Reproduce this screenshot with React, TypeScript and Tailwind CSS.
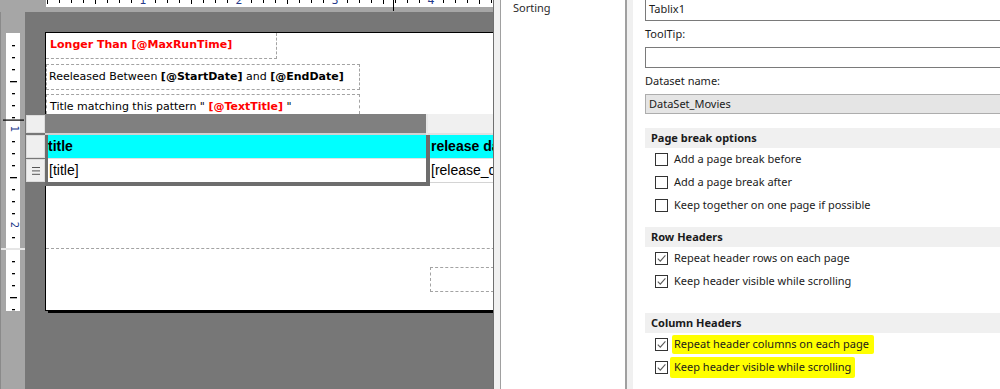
import React from "react";

const DASH = "border-dashed border-[#a3a3a3]";
const UI = "font-['Noto_Sans',sans-serif]";
const RPT = "font-['DejaVu_Sans',sans-serif]";
const TBL = "font-['Liberation_Sans',Arial,sans-serif]";

function HRuler() {
  const ticks = Array.from({ length: 38 }, (_, i) => i);
  return (
    <svg width="447" height="12" className="block shrink-0">
      <rect x="0" y="0" width="447" height="7" fill="#fff" />
      <rect x="0" y="7" width="447" height="5" fill="#a6a6a6" />
      {ticks.map((i) => {
        const x = 1 + i * 12;
        if (i % 8 === 0 && i > 0)
          return (
            <text key={i} x={x} y={4} fontSize="11" textAnchor="middle" fill="#23398a" fontFamily="DejaVu Sans">
              {i / 8}
            </text>
          );
        return <rect key={i} x={x} y={0} width={1} height={i % 4 === 0 ? 4 : 3} fill="#000" />;
      })}
      <rect x="347" y="0" width="1" height="11" fill="#000" />
    </svg>
  );
}

// left ruler, drawn from y=12 down
function VRuler() {
  const body = [45, 57, 69, 81, 93, 105, 117, 141, 153, 165, 177, 189, 201, 213, 237];
  const foot = [261, 273, 285, 297, 309];
  const longs = [81, 177, 297];
  return (
    <svg width="24" height="377" className="block">
      <rect x="5" y="21" width="14" height="278" fill="#fff" />
      <rect x="0" y="236" width="24" height="2" fill="#e6e6e6" />
      {[...body, ...foot].map((y) =>
        longs.includes(y) ? (
          <rect key={y} x="9" y={y - 12} width="7" height="1.3" fill="#000" />
        ) : (
          <rect key={y} x="11" y={y - 12} width="3" height="1.3" fill="#000" />
        )
      )}
      {[
        [129, "1"],
        [225, "2"],
      ].map(([y, d]) => (
        <text
          key={d}
          transform={`translate(12.5,${(y as number) - 12}) rotate(90)`}
          fontSize="10"
          textAnchor="middle"
          dominantBaseline="middle"
          fill="#23398a"
          fontFamily="DejaVu Sans"
        >
          {d}
        </text>
      ))}
      <rect x="2" y="107.5" width="21" height="1.2" fill="#000" />
    </svg>
  );
}

function Handle({ className = "", children }: { className?: string; children?: React.ReactNode }) {
  return (
    <div className={`ml-[1px] w-[19px] bg-[#efefef] border border-[#dcdcdc] flex items-center justify-center ${className}`}>
      {children}
    </div>
  );
}

function Tablix() {
  return (
    <div className={`ml-[-21px] flex flex-col ${TBL}`}>
      <div className="flex h-[21px]">
        <div className="w-[20px] pt-[1px] pb-[2px]">
          <Handle className="h-full" />
        </div>
        <div className="w-[381px] bg-[#808080] border-b-2 border-[#d0d0d0]" />
        <div className="w-[2px] bg-[#e8e8e8]" />
        <div className="w-[120px] bg-[#f0f0f0] border-b-2 border-[#e0e0e0]" />
      </div>
      <div className="flex">
        <div className="w-[20px] flex flex-col gap-[1px]">
          <Handle className="h-[23px]" />
          <Handle className="h-[23px]">
            <svg width="8" height="8" viewBox="0 0 8 8">
              <rect x="0" y="0" width="8" height="1" fill="#555" />
              <rect x="0" y="3.4" width="8" height="1" fill="#555" />
              <rect x="0" y="6.8" width="8" height="1" fill="#555" />
            </svg>
          </Handle>
        </div>
        <div className="w-[385px] flex flex-col border-l-[3px] border-r-[4px] border-b-[4px] border-[#6d6d6d]">
          <div className="h-[24px] bg-[#00ffff] border-b border-[#e2e2e2] flex items-center text-[14px] font-bold text-black">
            title
          </div>
          <div className="h-[23px] bg-white flex items-center pl-[1px] text-[14px] text-black">[title]</div>
        </div>
        <div className="w-[120px] flex flex-col">
          <div className="h-[24px] bg-[#00ffff] border-b border-[#e2e2e2] flex items-center pl-[1px] text-[14px] font-bold text-black whitespace-nowrap">
            release date
          </div>
          <div className="h-[24px] bg-white border-b border-[#d4d4d4] flex items-center pl-[1px] text-[14px] text-black whitespace-nowrap">
            [release_date]
          </div>
        </div>
      </div>
    </div>
  );
}

function Page() {
  return (
    <div className={`w-[600px] h-[279px] bg-white border-l border-t border-b border-black shadow-[3px_2px_0_0_#000] flex flex-col ${RPT} text-[11px]`}>
      <div className={`w-[231px] h-[26px] border-r border-b ${DASH} flex items-center pl-[4px] font-bold text-[#ff0000]`}>
        Longer Than [@MaxRunTime]
      </div>
      <div className={`mt-[5px] w-[314px] h-[26px] border ${DASH} flex items-center pl-[2px] text-black`}>
        Reeleased Between&nbsp;<b>[@StartDate]</b>&nbsp;and&nbsp;<b>[@EndDate]</b>
      </div>
      <div className={`mt-[4px] w-[314px] h-[20px] border-t border-l border-r ${DASH} pl-[3px] pt-[4px] leading-[16px] text-black whitespace-nowrap overflow-hidden`}>
        Title matching this pattern "&nbsp;<b className="text-[#ff0000]">[@TextTitle]</b>&nbsp;"
      </div>
      <Tablix />
      <div className={`h-[63px] border-b ${DASH}`} />
      <div className="flex-1">
        <div className={`mt-[18px] ml-[384px] w-[120px] h-[25px] border ${DASH}`} />
      </div>
    </div>
  );
}

function Designer() {
  return (
    <div className="w-[493px] shrink-0 h-full flex flex-col overflow-hidden bg-[#a6a6a6]">
      <div className="flex h-[12px] shrink-0">
        <div className="w-[46px] bg-[#a6a6a6]" />
        <HRuler />
      </div>
      <div className="flex flex-1">
        <div className="w-[25px] shrink-0 bg-[#a6a6a6] border-l border-[#8a8a8a]">
          <VRuler />
        </div>
        <div className="flex-1 bg-[#777777] pt-[20px] pl-[20px]">
          <Page />
        </div>
      </div>
    </div>
  );
}

function Check({ checked, label, mark }: { checked?: boolean; label: string; mark?: string }) {
  return (
    <div className="flex h-[23px] items-center pl-[10px]">
      <span className="flex h-[13px] w-[13px] shrink-0 items-center justify-center border border-[#333333] bg-white">
        {checked && (
          <svg width="11" height="11" viewBox="0 0 11 11">
            <path d="M1.8 5.6 L4.3 8.2 L9.4 2.4" fill="none" stroke="#5a5a5a" strokeWidth="1.1" />
          </svg>
        )}
      </span>
      {mark ? (
        <span className={`bg-[#ffff00] ${mark}`}>{label}</span>
      ) : (
        <span className="ml-[6px]">{label}</span>
      )}
    </div>
  );
}

function Section({ title, className = "", children }: { title: string; className?: string; children: React.ReactNode }) {
  return (
    <div className={className}>
      <div className="h-[20px] bg-[#f0f0f0] flex items-center pl-[6px] font-bold">{title}</div>
      {children}
    </div>
  );
}

export default function App() {
  return (
    <div className="flex w-[1000px] h-[389px] overflow-hidden bg-white">
      <Designer />
      <div className="w-[8px] shrink-0 bg-[#f0f0f0] border-l border-l-[#6f6f6f] border-r border-r-[#a0a0a0]" />
      <div className={`w-[124px] shrink-0 bg-white pl-[12px] ${UI} text-[11px] text-[#2a2a2a]`}>
        <div className="h-[16px] leading-[16px]">Sorting</div>
      </div>
      <div className="w-[8px] shrink-0 bg-[#f0f0f0] border-l-2 border-[#a0a0a0]" />
      <div className={`flex-1 overflow-hidden bg-white pl-[12px] ${UI} text-[11px] text-[#1b1b1b]`}>
        <div className="w-[380px]">
          <div className="-mt-[3px] flex h-[24px] items-center border border-[#7a7a7a] pl-[3px]">Tablix1</div>
          <div className="flex h-[26px] items-center">ToolTip:</div>
          <div className="h-[21px] border border-[#7a7a7a]" />
          <div className="flex h-[26px] items-center pt-[1px]">Dataset name:</div>
          <div className="flex h-[20px] items-center border border-[#adadad] bg-[#e5e5e5] pl-[3px]">DataSet_Movies</div>
          <Section title="Page break options" className="mt-[14px]">
            <Check label="Add a page break before" />
            <Check label="Add a page break after" />
            <Check label="Keep together on one page if possible" />
          </Section>
          <Section title="Row Headers" className="mt-[10px]">
            <Check checked label="Repeat header rows on each page" />
            <Check checked label="Keep header visible while scrolling" />
          </Section>
          <Section title="Column Headers" className="mt-[20px]">
            <Check checked label="Repeat header columns on each page" mark="ml-[4px] pl-[2px] pr-[5px] py-[1px] rounded-[2px]" />
            <Check checked label="Keep header visible while scrolling" mark="ml-[2px] pl-[4px] pr-[4px] py-[2px] rounded-[2px]" />
          </Section>
        </div>
      </div>
    </div>
  );
}
